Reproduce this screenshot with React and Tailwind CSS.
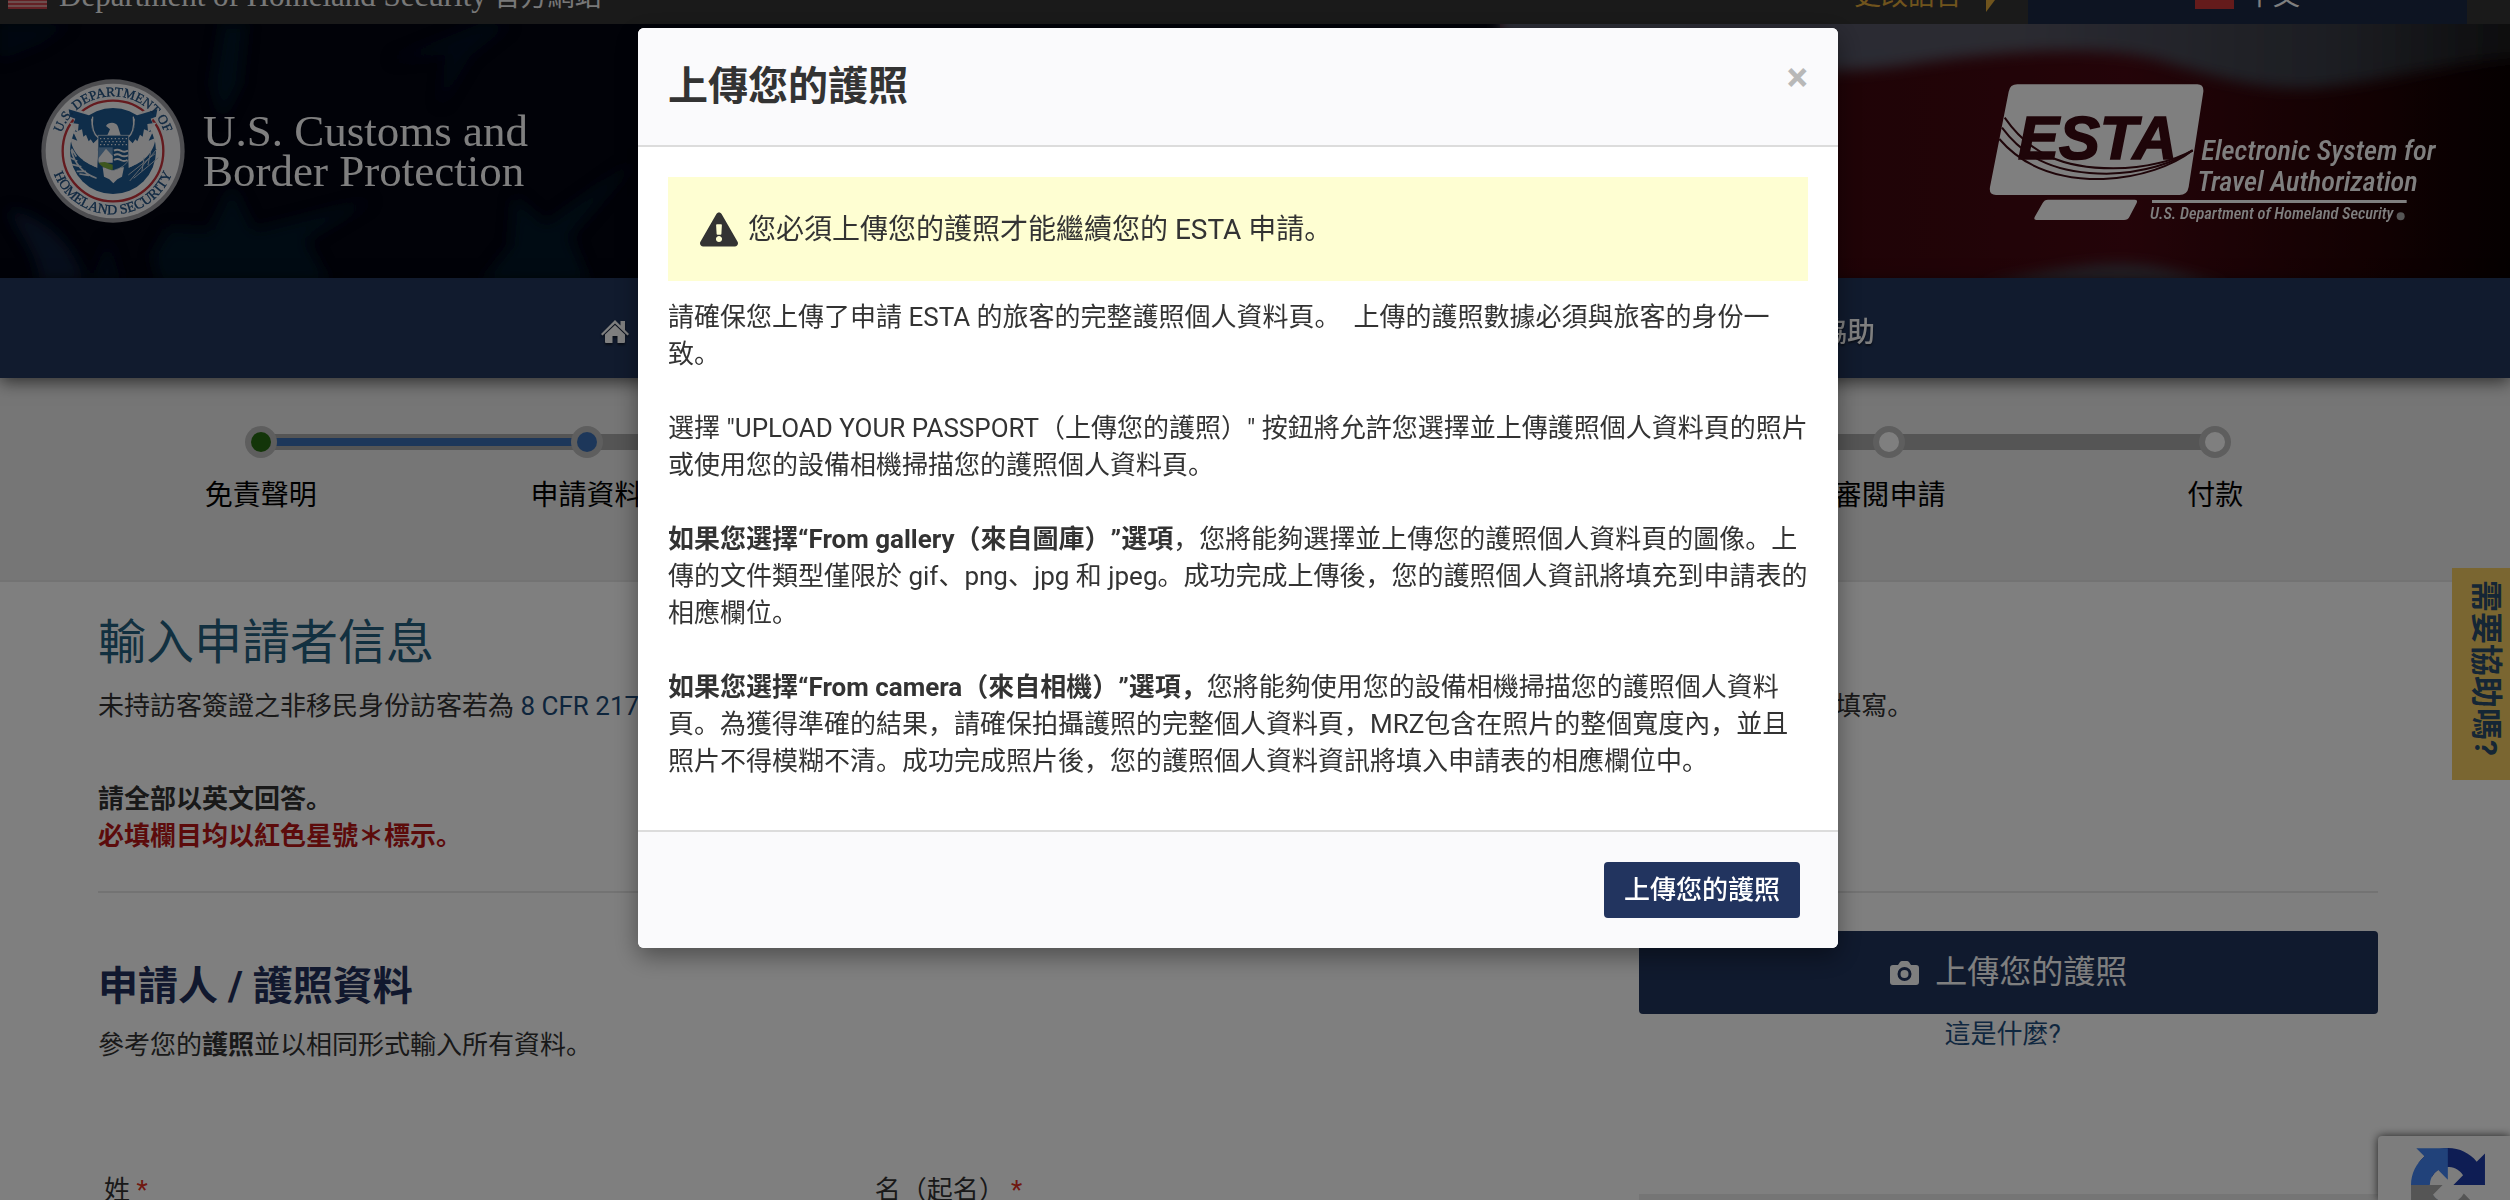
import { FaExclamationTriangle } from 'react-icons/fa';

const steps = [
    { label: "免責聲明", state: "done" },
    { label: "申請資料", state: "current" },
    { label: "個人資料", state: "todo" },
    { label: "旅行資料", state: "todo" },
    { label: "資格問題", state: "todo" },
    { label: "審閱申請", state: "todo" },
    { label: "付款", state: "todo" }
];

const dotColors = {
    done: "bg-[#276b12]",
    current: "bg-[#3a6fb5]",
    todo: "bg-white"
};

// Small flag used in the top banner
function UsFlag() {
    return (
        <svg viewBox="0 0 39 26" className="w-[39px] h-[26px]" aria-hidden="true">
            <rect width="39" height="26" fill="#d89a9a" />
            {[0, 4, 8, 12, 16, 20, 24].map((y) => (
                <rect key={y} y={y} width="39" height="2" fill="#c8434a" />
            ))}
            <rect width="17" height="14" fill="#3c5a96" />
        </svg>
    );
}

function TaiwanFlag() {
    return (
        <svg viewBox="0 0 39 26" className="w-[39px] h-[26px]" aria-hidden="true">
            <rect width="39" height="26" fill="#c83636" />
            <rect width="19" height="14" fill="#35468f" />
            <circle cx="9.500" cy="7" r="4" fill="#fff" />
        </svg>
    );
}

// Dark waving flag behind the header
function HeaderBackdrop() {
    return (
        <svg viewBox="0 0 2510 254" preserveAspectRatio="none" className="absolute inset-0 w-full h-full" aria-hidden="true">
            <defs>
                <filter id="soft" x="-10%" y="-10%" width="120%" height="120%">
                    <feGaussianBlur stdDeviation="7" />
                </filter>
                <linearGradient id="fabric" x1="0" x2="1">
                    <stop offset="0" stopColor="#40080f" />
                    <stop offset="0.3" stopColor="#3e070d" />
                    <stop offset="0.62" stopColor="#480912" />
                    <stop offset="0.85" stopColor="#260305" />
                    <stop offset="1" stopColor="#0a0001" />
                </linearGradient>
                <linearGradient id="stripe" x1="0" x2="1">
                    <stop offset="0" stopColor="#54586a" />
                    <stop offset="0.5" stopColor="#565664" />
                    <stop offset="0.8" stopColor="#383b45" />
                    <stop offset="1" stopColor="#151516" />
                </linearGradient>
            </defs>
            <rect width="2510" height="254" fill="#020410" />
            <g filter="url(#soft)" fill="#051426">
                <path d="M0 0H70L40 20L0 36Z" opacity="0.7" />
                <path d="M222 0H246L240 60L222 96L212 60Z" />
                <path d="M8 186C40 190 78 220 84 260H40C38 230 20 210 8 186Z" fill="#081d38" />
                <path d="M232 160L254 206L372 176L306 216L330 260H160L152 232L168 204L210 206Z" />
                <path d="M480 0H510L470 32L440 82L446 30L390 36Z" opacity="0.8" />
                <path d="M514 172L546 200L636 136L570 212L590 260H480L510 222Z" />
                <path d="M90 260L108 214L122 260Z" opacity="0.7" />
            </g>
            <rect x="1500" width="1010" height="254" fill="url(#fabric)" />
            <g filter="url(#soft)">
                <path d="M1500 -30V40C1700 46 1820 52 1900 42C1990 28 2090 20 2150 34C2210 50 2250 66 2310 64C2380 60 2450 36 2540 32V-30Z" fill="url(#stripe)" />
                <path d="M1980 262C2040 248 2090 238 2130 240C2170 242 2190 254 2230 262Z" fill="#45414b" />
            </g>
        </svg>
    );
}

function DhsSeal() {
    return (
        <svg viewBox="33 25 432 432" className="w-36 h-36" role="img" aria-label="U.S. Department of Homeland Security">
            <defs>
                <path id="sealTop" d="M86 259A164 164 0 1 1 412 259" />
                <path id="sealBottom" d="M59 241A190 190 0 0 0 439 241" />
            </defs>
            <circle cx="249" cy="241" r="215" fill="#9a9aa0" />
            <circle cx="249" cy="241" r="202" fill="#f4f4f6" />
            <circle cx="249" cy="241" r="151" fill="#fff" stroke="#c8343c" strokeWidth="7" />
            <circle cx="249" cy="241" r="129" fill="#1e5a92" />
            <path d="M118 112C150 112 172 126 186 146C180 176 190 196 206 202L200 290C160 276 124 246 122 202L142 210L128 180L142 184L118 156L134 156Z" fill="#f4f4f6" />
            <path d="M380 112C348 112 326 126 312 146C318 176 308 196 292 202L298 290C338 276 374 246 376 202L356 210L370 180L356 184L380 156L364 156Z" fill="#f4f4f6" />
            <path d="M116 116L184 136C180 172 190 196 206 202L190 218L182 206L176 212L168 192L160 198L156 176L144 180L146 160L130 158L136 144L120 138Z" fill="#1e5a92" />
            <path d="M382 116L314 136C318 172 308 196 292 202L308 218L316 206L322 212L330 192L338 198L342 176L354 180L352 160L368 158L362 144L378 138Z" fill="#1e5a92" />
            <path d="M188 136Q249 98 310 136L296 200H202Z" fill="#1e5a92" />
            <path d="M188 138C184 172 192 192 206 202M310 138C314 172 306 192 292 202" fill="none" stroke="#f4f4f6" strokeWidth="4" />
            <path d="M228 166C234 154 258 152 264 168L272 194H232L240 176Z" fill="#f4f4f6" />
            <path d="M124 206L142 224L130 226L152 244L142 248L166 264L158 268L202 292L204 240Z" fill="#f4f4f6" />
            <path d="M374 206L356 224L368 226L346 244L356 248L332 264L340 268L296 292L294 240Z" fill="#f4f4f6" />
            <path d="M218 290H282L276 318L262 326L250 338L238 326L222 318Z" fill="#f4f4f6" />
            <path d="M204 194H296V264Q290 288 249 300Q208 288 204 264Z" fill="#1e5a92" stroke="#f4f4f6" strokeWidth="2" />
            <g stroke="#e8edf4" strokeWidth="4" strokeDasharray="4 7">
                <path d="M210 204H292M214 213H290M210 222H292" />
            </g>
            <rect x="206" y="230" width="42" height="42" fill="#6d9ac6" />
            <path d="M206 262L228 234L248 256V276H206Z" fill="#f4f4f6" />
            <path d="M206 276L224 274L248 282V298C226 294 212 286 206 276Z" fill="#7cae3c" />
            <path d="M252 240Q262 234 272 240T294 240M252 254Q262 248 272 254T294 254M252 268Q262 262 272 268T292 268" fill="none" stroke="#f4f4f6" strokeWidth="6" />
            <path d="M124 240Q140 300 198 322M122 262L140 270M128 282L152 288M142 302L166 302M126 236L138 256M150 310L176 314" fill="none" stroke="#dfe5ec" strokeWidth="5" strokeLinecap="round" />
            <path d="M380 236L300 330M374 250L296 312M384 262L312 322M362 244L354 282M342 262L336 300" fill="none" stroke="#c4ced9" strokeWidth="3" strokeLinecap="round" />
            <g fill="#1e4f80" stroke="#1e4f80" strokeWidth="1" fontFamily="'Liberation Serif', serif" fontSize="40">
                <text>
                    <textPath href="#sealTop" startOffset="50%" textAnchor="middle">U.S. DEPARTMENT OF</textPath>
                </text>
                <text fontSize="42">
                    <textPath href="#sealBottom" startOffset="50%" textAnchor="middle">HOMELAND SECURITY</textPath>
                </text>
            </g>
        </svg>
    );
}

function EstaLogo() {
    return (
        <svg viewBox="0 0 1410 480" className="w-[470px] h-[160px]" role="img" aria-label="ESTA">
            <path d="M112 40H652Q672 40 670 62L626 348Q622 372 598 372H48Q26 372 30 348L86 62Q90 40 112 40Z" fill="#fff" />
            <path d="M204 386H464Q474 386 470 396L448 438Q444 447 432 447H170Q160 447 164 438L188 396Q193 386 204 386Z" fill="#fff" />
            <g fill="none" stroke="#3d0a12" strokeWidth="6">
                <path d="M74 140C150 250 250 292 400 292C500 290 580 270 638 238" />
                <path d="M66 170C140 270 240 308 380 308C490 306 580 276 638 238" />
                <path d="M58 204C140 300 260 326 370 324C480 320 580 284 638 238" />
            </g>
            <g fontFamily="'Liberation Sans', Arial, sans-serif" fontStyle="italic" fontWeight="bold">
                <text x="114" y="264" fontSize="184" fill="#3d0a12" stroke="#3d0a12" strokeWidth="5">ESTA</text>
                <g fill="#fff" fontWeight="500" fontFamily="'Liberation Sans Narrow', 'Roboto Condensed', 'Liberation Sans', sans-serif">
                    <text x="664" y="268" fontSize="85">Electronic System for</text>
                    <text x="652" y="361" fontSize="85">Travel Authorization</text>
                    <text x="510" y="445" fontSize="49">U.S. Department of Homeland Security</text>
                </g>
            </g>
            <rect x="516" y="387" width="764" height="9" fill="#fff" />
            <circle cx="1262" cy="436" r="12" fill="#aaa" />
        </svg>
    );
}

function HomeIcon() {
    return (
        <svg viewBox="0 0 28 24" className="w-7 h-6 drop-shadow-[0_2px_1px_rgba(0,0,0,0.5)]" fill="#fff" aria-hidden="true">
            <path d="M14 0L19.500 5.500V1H24V10L28 14L26.500 15.500L14 3.500L1.500 15.500L0 14Z" />
            <path d="M14 5L24 14.500V22Q24 23 23 23H16.500V16H11.500V23H5Q4 23 4 22V14.500Z" />
        </svg>
    );
}

function CameraIcon() {
    return (
        <svg viewBox="0 0 29 24" className="w-[29px] h-6" fill="none" aria-hidden="true">
            <path d="M3 4H8L10 1Q11 0 12 0H17Q18 0 19 1L21 4H26Q29 4 29 7V21Q29 24 26 24H3Q0 24 0 21V7Q0 4 3 4Z" fill="#fff" />
            <circle cx="14.500" cy="13" r="5.500" stroke="#22345f" strokeWidth="3" />
        </svg>
    );
}

function RecaptchaLogo() {
    return (
        <svg viewBox="0 0 64 64" className="w-[74px] h-[74px]" aria-hidden="true">
            <path fill="#1c3aa9" d="M64 31.955l-.033-1.370V4.687l-7.160 7.160C50.948 4.674 42.033.093 32.050.093c-10.400 0-19.622 4.960-25.458 12.640l11.736 11.860a15.550 15.550 0 0 1 4.754-5.334c2.050-1.600 4.952-2.906 8.968-2.906.485 0 .860.057 1.135.163 4.976.393 9.288 3.140 11.828 7.124l-8.307 8.307L64 31.953" />
            <path fill="#4285f4" d="M31.862.094l-1.370.033H4.594l7.160 7.160C4.580 13.147 0 22.060 0 32.046c0 10.400 4.960 19.622 12.640 25.458L24.500 45.768a15.550 15.550 0 0 1-5.334-4.754c-1.600-2.050-2.906-4.952-2.906-8.968 0-.485.057-.860.163-1.135.393-4.976 3.140-9.288 7.124-11.828l8.307 8.307L31.860.095" />
            <path fill="#ababab" d="M.001 32.045l.033 1.370v25.898l7.160-7.160c5.860 7.173 14.774 11.754 24.760 11.754 10.400 0 19.622-4.960 25.458-12.640l-11.736-11.860a15.550 15.550 0 0 1-4.754 5.334c-2.050 1.600-4.952 2.906-8.968 2.906-.485 0-.860-.057-1.135-.163-4.976-.393-9.288-3.140-11.828-7.124l8.307-8.307c-10.522.040-22.400.066-27.295-.005" />
        </svg>
    );
}

function Banner() {
    return (
        <div className="-mt-8 h-14 bg-[#343434] flex items-center justify-between pr-[43px]">
            <div className="flex items-center pl-2 gap-3">
                <UsFlag />
                <span className="text-[#f0f0f0] text-[27px] font-['Liberation_Serif','Noto_Sans_CJK_SC',serif]">
                    <span className="text-[31px]">Department of Homeland Security</span> 官方網站
                </span>
            </div>
            <div className="flex items-center h-full">
                <span className="text-[#e0a93a] text-[27px] mr-6">更改語言</span>
                <svg viewBox="0 0 12 32" className="w-3 h-8 mr-[30px]" aria-hidden="true">
                    <path d="M0 0L12 16L0 32Z" fill="#e0a93a" />
                </svg>
                <button type="button" className="w-[439px] h-full bg-[#1a2844] text-white text-[27px] flex items-center justify-center gap-3">
                    <TaiwanFlag />
                    中文
                </button>
            </div>
        </div>
    );
}

function Header() {
    return (
        <header className="relative h-[254px] overflow-hidden bg-black">
            <HeaderBackdrop />
            <div className="relative h-full flex items-center justify-between pl-[41px] pr-[60px]">
                <div className="flex items-center gap-[18px]">
                    <DhsSeal />
                    <p className="text-white text-[45px] leading-10 font-['Liberation_Serif',serif]">
                        U.S. Customs and
                        <br />
                        Border Protection
                    </p>
                </div>
                <EstaLogo />
            </div>
        </header>
    );
}

function Nav() {
    return (
        <nav className="relative h-[100px] bg-[#22365c] shadow-[0_4px_16px_rgba(0,0,0,0.6)] pr-[34px]">
            <div className="mx-auto max-w-[1274px] h-full pt-2 flex items-center justify-between text-white text-[28px] font-medium [text-shadow:0_2px_2px_rgba(0,0,0,0.5)]">
                <a href="#home" className="flex items-center gap-3"><HomeIcon />首頁</a>
                <a href="#new">新的申請</a>
                <a href="#status">檢查 ESTA 狀態</a>
                <a href="#help">協助</a>
            </div>
        </nav>
    );
}

function Progress() {
    return (
        <section className="h-[204px] bg-[#ececec] border-b-2 border-[#e6e6e6] pr-[34px] pt-12">
            <ol className="mx-auto max-w-[2280px] flex">
                {steps.map((step, index) => (
                    <li key={step.label} className="relative flex-1 flex flex-col items-center">
                        {index > 0 && (
                            <div className="absolute right-1/2 top-2 w-full h-4 bg-[#aaaaaa] flex items-center">
                                {step.state === "current" && <div className="w-full h-2 bg-[#3a6fb5]" />}
                            </div>
                        )}
                        <div className="relative z-10 w-8 h-8 rounded-full bg-[#bcbcbc] flex items-center justify-center">
                            <div className={`w-5 h-5 rounded-full ${dotColors[step.state]}`} />
                        </div>
                        <span className="mt-[18px] text-[28px] leading-10 text-black">{step.label}</span>
                    </li>
                ))}
            </ol>
        </section>
    );
}

function Application() {
    return (
        <main className="pr-[34px]">
            <div className="mx-auto max-w-[2280px]">
                <h1 className="pt-8 text-[48px] leading-[58px] text-[#246080]">輸入申請者信息</h1>
                <p className="mt-4 whitespace-nowrap">
                    未持訪客簽證之非移民身份訪客若為 <a href="#cfr" className="text-[#1d4a78]">8 CFR 217</a>所列舉的國家之國民，可依免簽證計劃前來美國旅行。符合資格的旅客均必須在出發之前完成此份申請表填寫。
                </p>
                <p className="mt-14 font-bold">請全部以英文回答。</p>
                <p className="font-bold text-[#b81616]">必填欄目均以紅色星號＊標示。</p>
                <hr className="mt-9 border-0 h-[2px] bg-[#e6e6e6]" />
                <div className="mt-[38px] grid grid-cols-3 gap-x-8">
                    <div className="col-span-2">
                        <h2 className="pt-7 text-[40px] leading-[56px] font-bold text-[#22305c]">申請人 / 護照資料</h2>
                        <p className="mt-3">參考您的<strong>護照</strong>並以相同形式輸入所有資料。</p>
                    </div>
                    <div className="flex flex-col items-center">
                        <button type="button" className="w-full h-[83px] rounded bg-[#20345c] text-white text-[32px] flex items-center justify-center gap-4">
                            <CameraIcon />
                            上傳您的護照
                        </button>
                        <a href="#what" className="mt-0.5 mr-3 text-[#1f4f80]">這是什麼?</a>
                    </div>
                    <div className="mt-[108px] pl-1.5">
                        <label htmlFor="family">姓 <span className="text-[#e03020]">*</span></label>
                        <input id="family" className="mt-2 w-full h-16 border-2 border-gray-300" />
                    </div>
                    <div className="mt-[108px] pl-1.5">
                        <label htmlFor="given">名（起名） <span className="text-[#e03020]">*</span></label>
                        <input id="given" className="mt-2 w-full h-16 border-2 border-gray-300" />
                    </div>
                    <div className="mt-[130px] h-20 bg-[#ebebeb]" />
                </div>
            </div>
        </main>
    );
}

function PassportModal() {
    return (
        <div className="fixed inset-0 z-50 bg-black/50 pt-7 pr-[34px]">
            <div role="dialog" aria-labelledby="modalTitle" className="mx-auto w-full max-w-[1200px] rounded-md overflow-hidden bg-white shadow-[0_8px_24px_rgba(0,0,0,0.4)]">
                <div className="bg-[#fafafc] border-b-2 border-[#dcdcdc] px-[30px] py-[30px] flex items-center justify-between">
                    <h2 id="modalTitle" className="text-[40px] leading-[57px] font-bold">上傳您的護照</h2>
                    <button type="button" aria-label="Close" className="self-start text-[40px] leading-10 font-bold text-[#b8b8b8]">×</button>
                </div>
                <div className="px-[30px] pt-[30px] pb-[50px]">
                    <div className="bg-[#fefed2] px-8 h-[104px] flex items-center gap-[10px] text-[28px]">
                        <FaExclamationTriangle className="w-[38px] h-[35px]" />
                        您必須上傳您的護照才能繼續您的 ESTA 申請。
                    </div>
                    <div className="mt-[18px] flex flex-col gap-[37px]">
                        <p>請確保您上傳了申請 ESTA 的旅客的完整護照個人資料頁。&nbsp; 上傳的護照數據必須與旅客的身份一致。</p>
                        <p>選擇 "UPLOAD YOUR PASSPORT（上傳您的護照）" 按鈕將允許您選擇並上傳護照個人資料頁的照片或使用您的設備相機掃描您的護照個人資料頁。</p>
                        <p><strong>如果您選擇“From gallery（來自圖庫）”選項</strong>，您將能夠選擇並上傳您的護照個人資料頁的圖像。上傳的文件類型僅限於 gif、png、jpg 和 jpeg。成功完成上傳後，您的護照個人資訊將填充到申請表的相應欄位。</p>
                        <p><strong>如果您選擇“From camera（來自相機）”選項，</strong>您將能夠使用您的設備相機掃描您的護照個人資料頁。為獲得準確的結果，請確保拍攝護照的完整個人資料頁，MRZ包含在照片的整個寬度內，並且照片不得模糊不清。成功完成照片後，您的護照個人資料資訊將填入申請表的相應欄位中。</p>
                    </div>
                </div>
                <div className="bg-[#fafafc] border-t-2 border-[#dcdcdc] h-[118px] px-[38px] flex items-center justify-end">
                    <button type="button" className="h-14 px-5 rounded bg-[#22345f] text-white font-medium">上傳您的護照</button>
                </div>
            </div>
        </div>
    );
}

export default function App() {
    return (
        <div className="relative h-screen overflow-hidden bg-white text-[#333] text-[26px] leading-[37px] [text-spacing-trim:space-all] font-['Roboto','Noto_Sans_CJK_SC',sans-serif]">
            <Banner />
            <Header />
            <Nav />
            <Progress />
            <Application />
            <a href="#support" className="absolute right-0 top-[568px] w-[58px] h-[212px] pt-3 pr-1 bg-[#f5cd62] text-[#2b4d6b] text-[32px] leading-10 font-bold [writing-mode:vertical-rl] [text-orientation:sideways]">
                需要協助嗎?
            </a>
            <div className="absolute right-0 bottom-0 w-[132px] h-16 overflow-hidden rounded-tl bg-[#fafafa] pl-[33px] pt-3 shadow-[0_0_10px_#444]">
                <RecaptchaLogo />
            </div>
            <PassportModal />
        </div>
    );
}
